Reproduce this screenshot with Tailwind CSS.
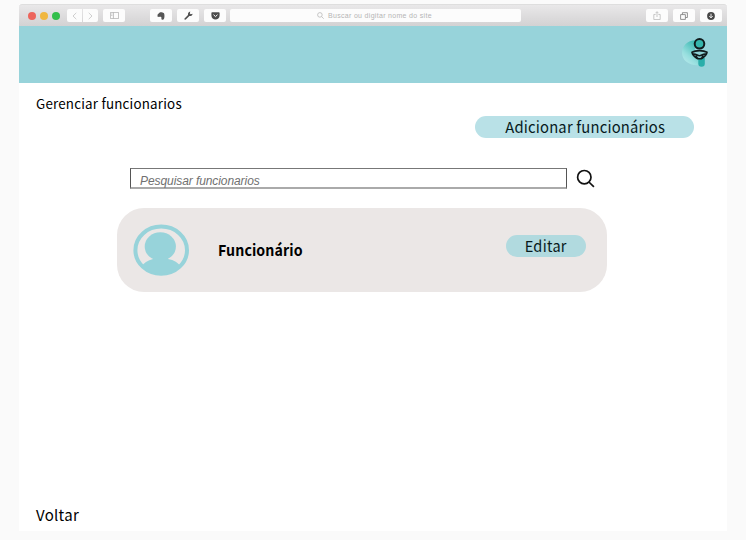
<!DOCTYPE html>
<html lang="pt">
<head>
<meta charset="utf-8">
<title>Gerenciar funcionarios</title>
<script src="https://cdn.jsdelivr.net/npm/@tailwindcss/browser@4"></script>
</head>
<body class="w-[746px] h-[540px] overflow-hidden bg-[#fafafa] pt-1 pl-[19px] text-black font-['Noto_Sans_CJK_SC','Noto_Sans',sans-serif]">
<div class="w-[708px] h-[527px] bg-white flex flex-col">
  <header class="h-[22px] shrink-0 flex items-center rounded-t-[3px] border-t border-[#dedede] bg-linear-to-b from-[#e9e8e9] to-[#d3d2d3] pl-[9px] pr-[5px]">
    <div class="flex gap-1 mr-[7px]">
      <span class="size-2 rounded-full bg-[#ed655c]"></span>
      <span class="size-2 rounded-full bg-[#f0b73f]"></span>
      <span class="size-2 rounded-full bg-[#33bf4b]"></span>
    </div>
    <div class="flex gap-px mr-[5px]">
      <button class="w-[15px] h-[13px] rounded-l-[2px] bg-[#fcfcfc] flex items-center justify-center"><svg class="w-[5px] h-2" viewBox="0 0 5 8" fill="none" stroke="#cfcfcf"><path d="M4.3 .8 1 4l3.300 3.200"/></svg></button>
      <button class="w-[15px] h-[13px] rounded-r-[2px] bg-[#fcfcfc] flex items-center justify-center"><svg class="w-[5px] h-2" viewBox="0 0 5 8" fill="none" stroke="#cfcfcf"><path d="M.7 .8 4 4 .7 7.200"/></svg></button>
    </div>
    <button class="w-[22px] h-[13px] rounded-[2px] bg-[#fcfcfc] flex items-center justify-center mr-[25px]"><svg class="w-[9px] h-[7px]" viewBox="0 0 9 7" fill="none" stroke="#b0b0b0" stroke-width=".8"><path d="M.4.4h8.200v6.200H.4zM3.400.4v6.200M1.300 2h1M1.300 3.500h1"/></svg></button>
    <div class="flex gap-[5px] mr-1">
      <button class="w-[22px] h-[13px] rounded-[2px] bg-[#fcfcfc] flex items-center justify-center"><svg class="size-2" viewBox="0 0 8 8" fill="#555"><path d="M.6 2.600 2.700.5C4-.1 6.900.6 7.200 1.700c.5 1.900.3 5.600-.9 5.900-1 .3-2-.1-1.900-1.100V5.200c-.8 0-1-.2-1.200-.6-.7.5-2.300.3-2.800-.2C.6 3.900.5 3.200.6 2.600z"/></svg></button>
      <button class="w-[22px] h-[13px] rounded-[2px] bg-[#fcfcfc] flex items-center justify-center"><svg class="size-[9px]" viewBox="0 0 9 9" fill="#4f4f4f"><path d="M.5 7.400 4 4.100C3.700 2.600 4.500.9 6.300.6L5.800 2.400l1 .9 1.800-.5C8.400 4.700 6.800 5.400 5.400 5L1.800 8.500C1 9 0 8.200.5 7.400z"/></svg></button>
      <button class="w-[22px] h-[13px] rounded-[2px] bg-[#fcfcfc] flex items-center justify-center"><svg class="w-[9px] h-2" viewBox="0 0 9 8"><path d="M1.200.3h6.600q.8 0 .8.800v2.400c0 5.400-8.200 5.400-8.200 0V1.100q0-.8.8-.8z" fill="#4c4c4c"/><path d="m2.500 2.700 2 1.900 2-1.900" fill="none" stroke="#fff"/></svg></button>
    </div>
    <div class="w-[291px] h-[13px] rounded-[2px] bg-[#fcfcfc] flex items-center pl-[87px] text-[7px] leading-none text-[#b5b5b5] font-['Liberation_Sans',sans-serif] whitespace-nowrap">
      <svg class="size-[7px] mr-1 shrink-0" viewBox="0 0 7 7" fill="none" stroke="#b0b0b0" stroke-width=".7"><circle cx="2.900" cy="2.900" r="2.300"/><path d="m4.700 4.700 2 2"/></svg><span class="tracking-[0.31px]">Buscar ou digitar nome do site</span>
    </div>
    <div class="flex gap-[5px] ml-auto">
      <button class="w-[22px] h-[13px] rounded-[2px] bg-[#fcfcfc] flex items-center justify-center"><svg class="w-2 h-[9px]" viewBox="0 0 8 9" fill="none" stroke="#bbb" stroke-width=".8"><path d="M2.600 3.500H.8v5h6.400v-5H5.400M4 6V.8M2.500 2.200 4 .7l1.500 1.500"/></svg></button>
      <button class="w-[22px] h-[13px] rounded-[2px] bg-[#fcfcfc] flex items-center justify-center"><svg class="size-2" viewBox="0 0 8 8" fill="none" stroke="#777" stroke-width=".8"><path d="M.6 2.600h4.800v4.800H.6zM2.400 2.500V.7h5v4.800H5.500"/></svg></button>
      <button class="w-[22px] h-[13px] rounded-[2px] bg-[#fcfcfc] flex items-center justify-center"><svg class="size-2" viewBox="0 0 8 8"><circle cx="4" cy="4" r="3.900" fill="#484848"/><path d="M4 1.700v4M2.300 4.100 4 5.900l1.700-1.800" fill="none" stroke="#fff" stroke-width=".9"/></svg></button>
    </div>
  </header>
  <div class="h-[57px] shrink-0 bg-[#97d3da] flex justify-end pt-[11px] pr-[17px]">
    <svg class="w-[30px] h-[32px]" viewBox="0 0 30 32">
      <defs><linearGradient id="halo" x1="0" y1="1" x2=".7" y2="0"><stop stop-color="#c2edef"/><stop offset=".4" stop-color="#98dfdf"/><stop offset=".75" stop-color="#5cc6c2"/><stop offset="1" stop-color="#36b6ae"/></linearGradient></defs>
      <path d="M16 3.200C7.500 3 2 9 2 15.800S8 28.500 18 28.300L21 24 14 18z" fill="url(#halo)"/>
      <path d="M18.300 21h6.500v5.500a3.250 3.250 0 0 1-6.500 0z" fill="#2aaeaa"/>
      <circle cx="19.500" cy="6.800" r="4.800" fill="#35b5ac" stroke="#101b1d" stroke-width="2"/>
      <path d="M12 15.300c3.500-2.200 11.500-2.200 15 0-.5 2.700-2.200 4.200-4.500 5.700-1.200.9-4.800.9-6 0-2.300-1.500-4-3-4.500-5.700z" fill="#8ed1d5" stroke="#101b1d" stroke-width="1.600"/>
      <path d="M13 17.200c3-.6 4.500 1.500 6.500 1.500s3.500-2.100 6.500-1.500M15.500 18.800l2 2M23.500 18.800l-2 2" fill="none" stroke="#101b1d" stroke-width="1.600"/>
    </svg>
  </div>
  <main class="flex-1 flex flex-col items-start pl-[17px] pt-[10px] pb-[5px]">
    <h1 class="text-[13.500px] leading-5 h-5 tracking-[0.2px] whitespace-nowrap origin-left scale-x-[.99]">Gerenciar funcionarios</h1>
    <button class="ml-[439px] mt-[3px] w-[219px] h-[22px] rounded-full bg-[#b9e1e7] text-[#07191c] flex justify-center pl-[2px]"><span class="block text-[15px] leading-[22px] tracking-[0.2px] whitespace-nowrap scale-x-[.985]">Adicionar funcionários</span></button>
    <div class="flex items-start ml-[94px] mt-[30px]">
      <div class="w-[437px] h-[21px] border border-[#555] border-t-[#777] border-b-2 border-b-[#aaa] pl-[9px] pt-[5px] text-[12px] leading-[15px] tracking-[-0.08px] italic text-[#707070] font-['Liberation_Sans',sans-serif] whitespace-nowrap">Pesquisar funcionarios</div>
      <svg class="size-[20px] ml-[9px] mt-px" viewBox="0 0 20 20" fill="none" stroke="#111" stroke-width="1.700"><circle cx="8.300" cy="8.200" r="6.700"/><path d="m12.900 13 5 4.800"/></svg>
    </div>
    <section class="ml-[81px] mt-[19px] w-[490px] h-[84px] rounded-[27px] bg-[#ebe7e6] flex items-start pl-4 pr-[21px]">
      <svg class="w-[57px] h-[53px] mt-4 shrink-0" viewBox="0 0 57 53">
        <defs><clipPath id="disc"><ellipse cx="28.200" cy="26.200" rx="26" ry="24"/></clipPath></defs>
        <ellipse cx="28.200" cy="26.200" rx="25.800" ry="23.600" fill="#ebe7e6" stroke="#97d3da" stroke-width="4"/>
        <g fill="#97d3da" clip-path="url(#disc)"><ellipse cx="27.300" cy="22.500" rx="15.600" ry="14.200"/><path d="M20 33h15v2q9 1.300 13 8.200L38 55H19L8 43.200q4-6.500 12-8.200z"/></g>
      </svg>
      <strong class="ml-[28px] mt-[31px] text-[15px] leading-[22px] font-bold tracking-[0.1px] origin-left scale-x-[.945]">Funcionário</strong>
      <button class="ml-auto mt-[27px] w-[80px] h-[22px] rounded-full bg-[#b1dadf] text-[#07191c] flex justify-center"><span class="block text-[15px] leading-[22px] tracking-[0.3px] scale-x-[.97]">Editar</span></button>
    </section>
    <a class="mt-auto text-[15px] leading-[22px] tracking-[0.3px]">Voltar</a>
  </main>
</div>
</body>
</html>
